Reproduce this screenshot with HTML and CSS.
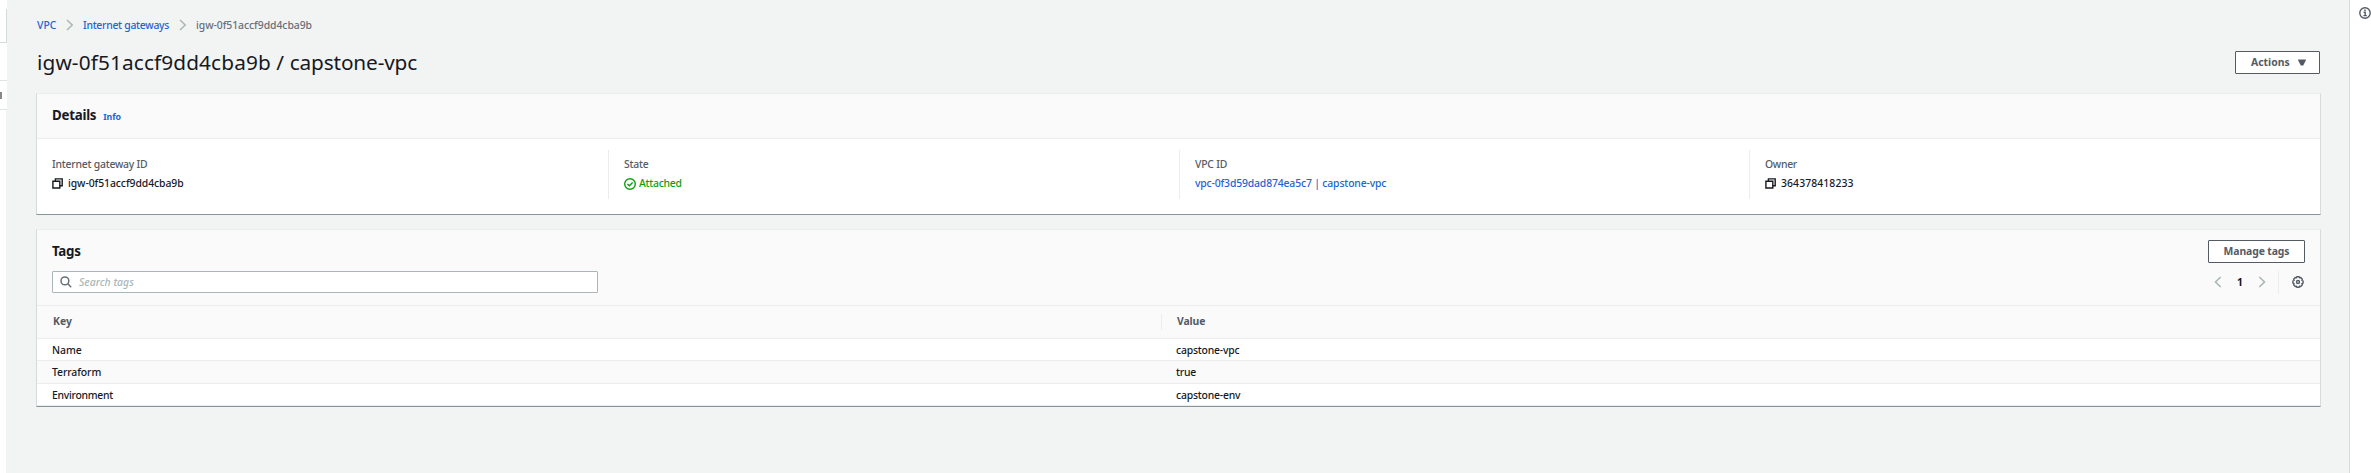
FILE: index.html
```html
<!DOCTYPE html>
<html lang="en">
<head>
<meta charset="utf-8">
<title>Internet gateway</title>
<link rel="stylesheet" href="styles.css">
</head>
<body>
<div class="app">
  <aside class="side"><div class="side-a"></div><div class="side-b"></div><div class="side-c"><i></i></div><div class="side-d"></div></aside>
  <main class="main">
    <nav class="crumbs">
      <a class="crumb-vpc">VPC</a>
      <svg class="crumb-sep" viewBox="0 0 8 12"><path d="M1 1l5.2 5L1 11"/></svg>
      <a class="crumb-list">Internet gateways</a>
      <svg class="crumb-sep" viewBox="0 0 8 12"><path d="M1 1l5.2 5L1 11"/></svg>
      <span class="crumb-id">igw-0f51accf9dd4cba9b</span>
    </nav>
    <header class="title-row">
      <h1><span class="title-id">igw-0f51accf9dd4cba9b / </span><span class="title-name">capstone-vpc</span></h1>
      <button class="btn actions"><span>Actions</span><svg viewBox="0 0 8 7"><path d="M.2.5h7.6v1L5.2 6.4H2.8L.2 1.5z"/></svg></button>
    </header>
    <section class="card details">
      <div class="card-head"><h2 class="h-details">Details</h2><a class="info">Info</a></div>
      <div class="cols">
        <div class="col"><div class="label l-id">Internet gateway ID</div><div class="value"><svg class="copy" viewBox="0 0 11 11"><path d="M3.4 3V.9h6.8v6.8H8M.9 3.2h6.9V10H.9z"/></svg><span class="v-id">igw-0f51accf9dd4cba9b</span></div></div>
        <div class="col"><div class="label l-state">State</div><div class="value ok"><svg class="check" viewBox="0 0 12 12"><circle cx="6" cy="6" r="5.3"/><path d="M3.4 5.9l2 1.9 3.2-3.2"/></svg><span class="v-state">Attached</span></div></div>
        <div class="col"><div class="label l-vpc">VPC ID</div><div class="value"><a class="v-vpc">vpc-0f3d59dad874ea5c7 | capstone-vpc</a></div></div>
        <div class="col"><div class="label l-owner">Owner</div><div class="value"><svg class="copy" viewBox="0 0 11 11"><path d="M3.4 3V.9h6.8v6.8H8M.9 3.2h6.9V10H.9z"/></svg><span class="v-owner">364378418233</span></div></div>
      </div>
    </section>
    <section class="card tags">
      <div class="tags-head">
        <div class="tags-top"><h2 class="h-tags">Tags</h2><button class="btn manage"><span>Manage tags</span></button></div>
        <div class="tools">
          <div class="search"><svg viewBox="0 0 12 12"><circle cx="4.9" cy="4.9" r="3.9"/><path d="M7.8 7.8l3.4 3.4"/></svg><span>Search tags</span></div>
          <div class="pager">
            <svg class="arrow" viewBox="0 0 8 12"><path d="M6.7 1L1.5 6l5.2 5"/></svg>
            <b>1</b>
            <svg class="arrow" viewBox="0 0 8 12"><path d="M1.3 1l5.2 5-5.2 5"/></svg>
            <i class="rule"></i>
            <svg class="gear" viewBox="0 0 12 12"><path d="M4.9.8h2.2l.5 1 1.1-.2 1.6 1.6-.3 1.2 1.1.5v2.2l-1.1.5.3 1.2-1.6 1.6-1.1-.2-.5 1H4.9l-.5-1-1.1.2-1.6-1.6.3-1.2-1.1-.5V4.9L2 4.4l-.3-1.2 1.6-1.6 1.1.2z"/><circle cx="6" cy="6" r="1.5"/></svg>
          </div>
        </div>
      </div>
      <div class="row thead"><span class="k"><span class="t-key">Key</span></span><span class="v"><span class="t-value">Value</span></span></div>
      <div class="row r1"><span class="k"><span class="t-name">Name</span></span><span class="v"><span class="t-cvpc">capstone-vpc</span></span></div>
      <div class="row r2"><span class="k"><span class="t-tf">Terraform</span></span><span class="v"><span class="t-true">true</span></span></div>
      <div class="row r3"><span class="k"><span class="t-env">Environment</span></span><span class="v"><span class="t-cenv">capstone-env</span></span></div>
    </section>
  </main>
  <aside class="help"><svg viewBox="0 0 12 12"><circle cx="6" cy="6" r="5.2"/><path d="M5.2 3.3h1.5M4.6 5.3h1.6v3M4.4 8.6h3.4"/></svg></aside>
</div>
</body>
</html>
```
FILE: styles.css
```css
* { box-sizing: border-box; }
body { margin: 0; background: #f2f3f3; font: 500 10.4px/14px "Noto Sans", sans-serif; color: #16191f; }
svg { display: block; flex: none; fill: none; }
h1, h2 { margin: 0; }
a { color: #2264d1; }
.app { display: flex; height: 473px; overflow: hidden; white-space: nowrap; }
.side { width: 7px; flex: none; display: flex; flex-direction: column; }
.side-a { height: 43px; background: #fff; border-bottom: 1px solid #d5dbdb; padding-top: 9px; }
.side-a::before { content: ""; display: block; height: 33px; border-right: 1px solid #d5dbdb; }
.side-b { height: 38px; background: #fff; border-bottom: 1px solid #dfe3e3; }
.side-c { height: 29px; background: #fff; border-bottom: 1px solid #dfe3e3; padding-top: 11px; }
.side-c i { display: block; width: 2px; height: 7px; background: #888; }
.side-d { flex: 1; width: 6px; background: #fff; }
.main { flex: 1; padding: 18px 28px 0 29px; }
.help { width: 22px; flex: none; background: #fff; border-left: 1px solid #d5dbdb; padding: 7px 0 0 9px; }
.help svg { width: 12px; height: 12px; stroke: #545b64; stroke-width: 1.4; }

.crumbs { display: flex; align-items: center; height: 14px; padding-left: 1px; }
.crumb-vpc { width: 29px; }
.crumb-list { width: 96px; letter-spacing: -.27px; }
.crumb-sep { width: 8px; height: 12px; stroke: #aab7b8; stroke-width: 1.5; }
.crumb-sep + .crumb-list { margin-left: 9px; }
.crumb-sep + .crumb-id { margin-left: 9px; }
.crumb-id { color: #687078; letter-spacing: -.05px; }

.title-row { display: flex; justify-content: space-between; align-items: center; height: 24px; margin: 18px 0 19px; padding: 0 1px; }
h1 { font-size: 20.8px; line-height: 24px; font-weight: 400; }
.title-id { letter-spacing: .12px; white-space: pre; }
.title-name { letter-spacing: -.15px; }
.btn { height: 23px; background: #fff; border: 1px solid #545b64; border-radius: 1px; font: 700 10.4px/14px "Noto Sans", sans-serif; color: #545b64; padding: 0 15px 1px; display: flex; align-items: center; white-space: nowrap; }
.actions { width: 85px; justify-content: space-between; padding-right: 13px; }
.actions svg { width: 8px; height: 7px; margin-top: 1px; fill: #545b64; }

.card { border: 1px solid #d5dbdb; border-top-color: #eaeded; border-bottom-color: #879596; background: #fff; }
.details { height: 122px; }
.card-head { height: 45px; background: #fafafa; border-bottom: 1px solid #eaeded; display: flex; align-items: baseline; padding: 10px 15px 0; }
h2 { font-size: 13.3px; line-height: 22px; font-weight: 700; letter-spacing: -.25px; }
.info { font-size: 8.8px; font-weight: 700; margin-left: 7px; letter-spacing: -.1px; }
.cols { display: grid; grid-template-columns: 571px 571px 570px 1fr; padding-top: 11px; }
.col { height: 49px; padding: 7px 0 0 15px; border-left: 1px solid #eaeded; }
.col:first-child { border-left: 0; }
.label { color: #545b64; height: 18px; line-height: 14px; }
.l-id { letter-spacing: -.22px; }
.l-state, .l-vpc { letter-spacing: -.2px; }
.l-owner { letter-spacing: -.3px; }
.value { display: flex; align-items: center; height: 15px; }
.value svg { margin-top: 2px; }
.v-id { letter-spacing: -.07px; }
.v-state { letter-spacing: -.25px; }
.v-vpc { letter-spacing: -.15px; }
.v-owner { letter-spacing: .1px; }
.copy { width: 11px; height: 11px; stroke: #16191f; stroke-width: 1.4; margin-right: 5px; }
.ok { color: #0f9d0f; }
.check { width: 12px; height: 12px; stroke: #0f9d0f; stroke-width: 1.4; margin-right: 3px; }

.tags { margin-top: 14px; height: 178px; }
.tags-head { height: 76px; background: #fafafa; border-bottom: 1px solid #eaeded; padding: 10px 15px 0; }
.tags-top { display: flex; justify-content: space-between; height: 31px; }
.manage { width: 97px; justify-content: center; letter-spacing: -.1px; }
.tools { display: flex; justify-content: space-between; }
.search { width: 546px; height: 22px; background: #fff; border: 1px solid #aab7b8; border-radius: 1px; display: flex; align-items: center; padding-left: 7px; }
.search svg { width: 12px; height: 12px; stroke: #687078; stroke-width: 1.5; margin-right: 7px; }
.search span { color: #aab7b8; font-style: italic; letter-spacing: .02px; }
.pager { display: flex; align-items: center; height: 22px; padding-right: 1px; }
.arrow { width: 8px; height: 12px; stroke: #aab7b8; stroke-width: 1.6; }
.pager b { width: 36px; text-align: center; }
.rule { width: 1px; height: 23px; background: #eaeded; margin: 0 13px 0 12px; }
.gear { width: 12px; height: 12px; stroke: #545b64; stroke-width: 1.4; }
.row { display: flex; align-items: center; border-bottom: 1px solid #eaeded; }
.k { width: 1124px; padding-left: 15px; }
.v { padding-left: 15px; }
.thead { height: 33px; background: #fafafa; font-weight: 700; color: #545b64; }
.thead .k { width: 1125px; height: 16px; line-height: 15px; padding-left: 16px; border-right: 1px solid #eaeded; }
.thead .v { height: 16px; line-height: 15px; letter-spacing: -.1px; }
.t-env { letter-spacing: -.27px; }
.t-tf { letter-spacing: -.08px; }
.t-cvpc, .t-cenv, .t-true { letter-spacing: -.2px; }
.r1 { height: 22px; }
.r2 { height: 23px; background: #fafafa; }
.r3 { height: 22px; }
```
